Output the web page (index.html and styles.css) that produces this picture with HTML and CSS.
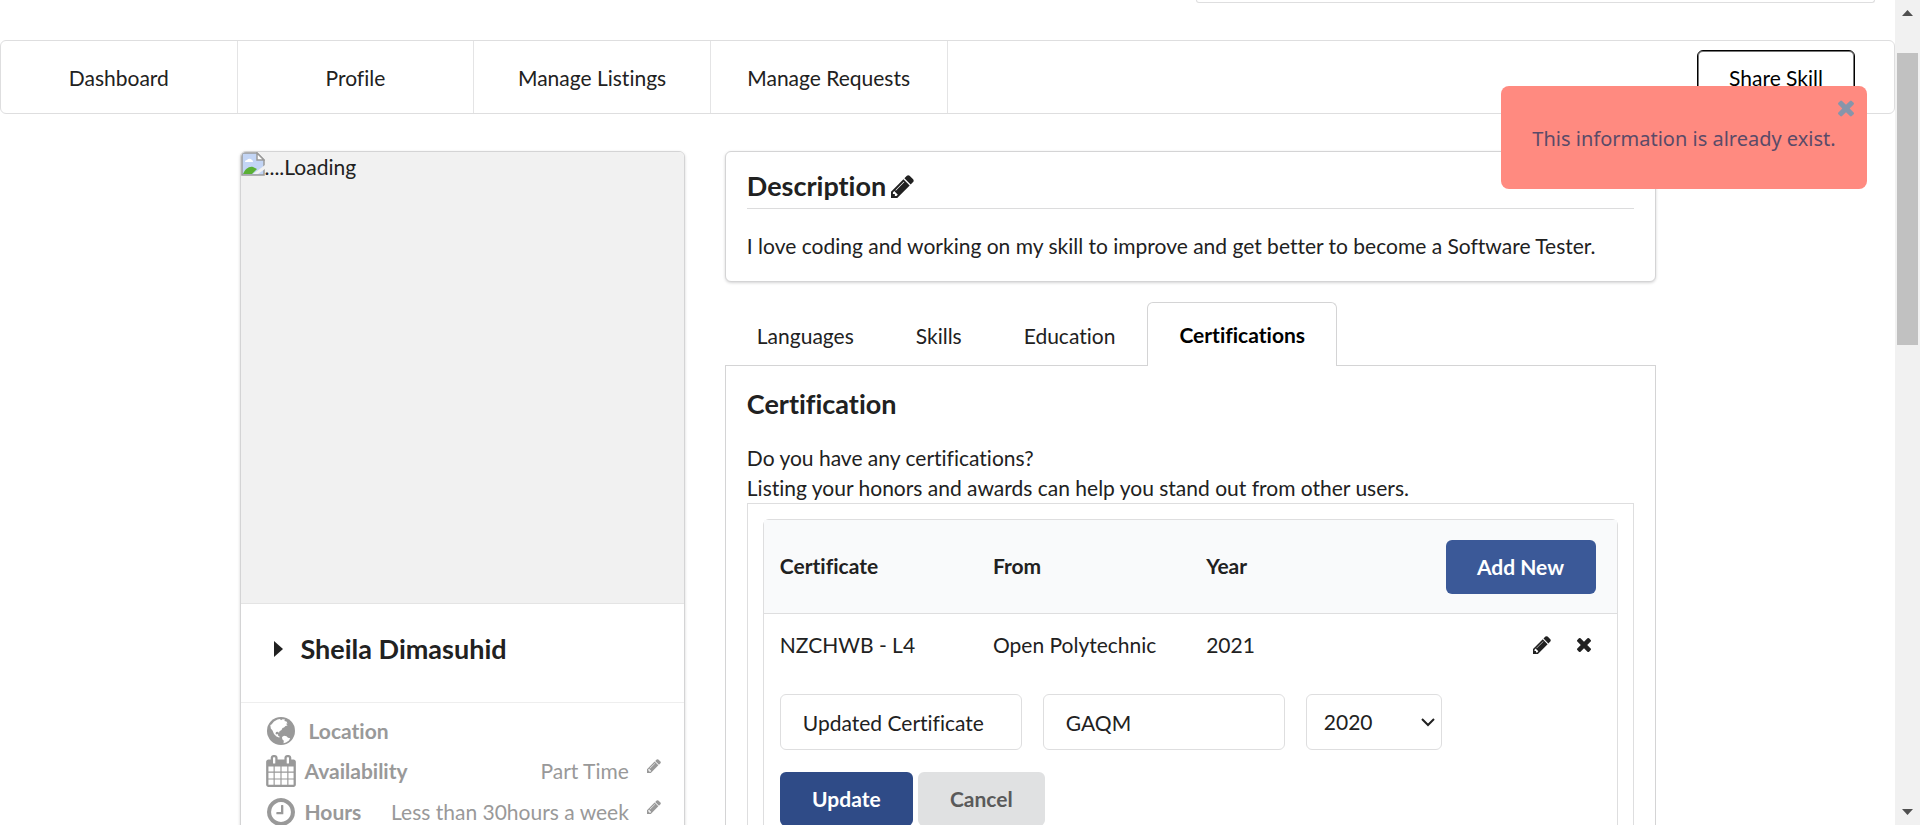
FILE: index.html
```html
<!DOCTYPE html>
<html lang="en">
<head>
<meta charset="utf-8">
<title>Profile</title>
<link rel="stylesheet" href="styles.css">
</head>
<body>
<svg class="defs" aria-hidden="true">
  <symbol id="pencil" viewBox="0 0 1536 1536"><path transform="matrix(1 0 0 -1 0 1402)" d="M363 0l91 91l-235 235l-91 -91v-107h128v-128h107zM886 928q0 22 -22 22q-10 0 -17 -7l-542 -542q-7 -7 -7 -17q0 -22 22 -22q10 0 17 7l542 542q7 7 7 17zM832 1120l416 -416l-832 -832h-416v416zM1515 1024q0 -53 -37 -90l-166 -166l-416 416l166 165q36 38 90 38q53 0 91 -38l235 -234q37 -39 37 -91z"/></symbol>
  <symbol id="cross" viewBox="110 0 1188 1188"><path transform="matrix(1 0 0 -1 0 1170)" d="M1298 214q0 -40 -28 -68l-136 -136q-28 -28 -68 -28t-68 28l-294 294l-294 -294q-28 -28 -68 -28t-68 28l-136 136q-28 28 -28 68t28 68l294 294l-294 294q-28 28 -28 68t28 68l136 136q28 28 68 28t68 -28l294 -294l294 294q28 28 68 28t68 -28l136 -136q28 -28 28 -68t-28 -68l-294 -294l294 -294q28 -28 28 -68z"/></symbol>
  <symbol id="calendar" viewBox="0 0 1664 1792"><path transform="matrix(1 0 0 -1 0 1536)" d="M128 -128h288v288h-288v-288zM480 -128h320v288h-320v-288zM128 224h288v320h-288v-320zM480 224h320v320h-320v-320zM128 608h288v288h-288v-288zM864 -128h320v288h-320v-288zM480 608h320v288h-320v-288zM1248 -128h288v288h-288v-288zM864 224h320v320h-320v-320zM512 1088v288q0 13 -9.5 22.5t-22.5 9.5h-64q-13 0 -22.5 -9.5t-9.5 -22.5v-288q0 -13 9.5 -22.5t22.5 -9.5h64q13 0 22.5 9.5t9.5 22.5zM1248 224h288v320h-288v-320zM864 608h320v288h-320v-288zM1248 608h288v288h-288v-288zM1280 1088v288q0 13 -9.5 22.5t-22.5 9.5h-64q-13 0 -22.5 -9.5t-9.5 -22.5v-288q0 -13 9.5 -22.5t22.5 -9.5h64q13 0 22.5 9.5t9.5 22.5zM1664 1152v-1280q0 -52 -38 -90t-90 -38h-1408q-52 0 -90 38t-38 90v1280q0 52 38 90t90 38h128v96q0 66 47 113t113 47h64q66 0 113 -47t47 -113v-96h384v96q0 66 47 113t113 47h64q66 0 113 -47t47 -113v-96h128q52 0 90 -38t38 -90z"/></symbol>
  <symbol id="clock" viewBox="0 0 1536 1536"><path transform="matrix(1 0 0 -1 0 1408)" d="M896 992v-448q0 -14 -9 -23t-23 -9h-320q-14 0 -23 9t-9 23v64q0 14 9 23t23 9h224v352q0 14 9 23t23 9h64q14 0 23 -9t9 -23zM1312 640q0 148 -73 273t-198 198t-273 73t-273 -73t-198 -198t-73 -273t73 -273t198 -198t273 -73t273 73t198 198t73 273zM1536 640q0 -209 -103 -385.5t-279.5 -279.5t-385.5 -103t-385.5 103t-279.5 279.5t-103 385.5t103 385.5t279.5 279.5t385.5 103t385.5 -103t279.5 -279.5t103 -385.5z"/></symbol>
  <symbol id="globe" viewBox="0 0 28 28"><circle cx="14" cy="14" r="14"/><path fill="#fff" d="M4.500 7.500 7 4.500l3.500-2 2.500-.5 1 1.200 1.500-1 2.500.3-.6 1.500 2.100.5 1 2-1.500.3 1.500 1.700-2 .5-1.500 1.500-1.500.5-1 2-2 1.200-.5 1.800-1-1.200-2 .3-.5 2 1.500.5 1-.5.2 1.700 1.800 1.200-1 .5-2.500-1-2.500-2.500-1.500-3.500-1.700-2-.5-3.500z"/><path fill="#fff" d="m15 20 2-1.200 2.500.4 1.500 1.500 2.200.6-1.200 2.200-3 2-2.500.7.3-2.500-1.500-1.500z"/></symbol>
</svg>

<div class="page">
  <main class="content">
    <div class="search-row"><div class="search-box"></div></div>

    <nav class="menu">
      <a class="menu-item" href="#">Dashboard</a>
      <a class="menu-item" href="#">Profile</a>
      <a class="menu-item" href="#">Manage Listings</a>
      <a class="menu-item" href="#">Manage Requests</a>
      <div class="menu-right"><button class="share" type="button">Share Skill</button></div>
    </nav>

    <div class="columns">
      <aside class="side">
        <section class="card profile">
          <div class="photo">
            <svg class="broken" viewBox="0 0 24 24" aria-hidden="true"><path fill="#c3d5f5" stroke="#9a9a9a" stroke-width="1.500" d="M1 1h15l7 7v15H1z"/><path fill="#fff" d="M4 10a2 2 0 0 1 2-2 3 3 0 0 1 5 0 2 2 0 0 1 1 2z"/><path fill="#5ab035" d="M2 22c2-5 6-8 10-7l4 2-5 5z"/><path fill="#fff" stroke="#9a9a9a" stroke-width="1.500" d="M16 1v7h7z"/><path fill="#f1f1f1" d="m24 13-12 9h5l7-5z"/></svg><span>....Loading</span>
          </div>
          <div class="name"><svg class="caret" viewBox="0 0 9 16" aria-hidden="true"><path d="M0 0l9 8-9 8z"/></svg><h3 class="title">Sheila Dimasuhid</h3></div>
          <ul class="facts">
            <li class="fact fact-first"><svg class="fact-icon"><use href="#globe"/></svg><strong>Location</strong></li>
            <li class="fact"><svg class="fact-icon fact-calendar"><use href="#calendar"/></svg><strong>Availability</strong><span class="value">Part Time</span><button class="icon-button" type="button" aria-label="Edit availability"><svg class="small-pencil"><use href="#pencil"/></svg></button></li>
            <li class="fact"><svg class="fact-icon"><use href="#clock"/></svg><strong>Hours</strong><span class="value">Less than 30hours a week</span><button class="icon-button" type="button" aria-label="Edit hours"><svg class="small-pencil"><use href="#pencil"/></svg></button></li>
          </ul>
        </section>
      </aside>

      <div class="details">
        <section class="card description">
          <div class="description-head"><h3 class="title">Description</h3><button class="icon-button" type="button" aria-label="Edit description"><svg class="large-pencil"><use href="#pencil"/></svg></button></div>
          <p class="text">I love coding and working on my skill to improve and get better to become a Software Tester.</p>
        </section>

        <div class="tabs">
          <a class="tab" href="#">Languages</a>
          <a class="tab" href="#">Skills</a>
          <a class="tab" href="#">Education</a>
          <a class="tab tab-active" href="#">Certifications</a>
        </div>

        <section class="panel">
          <h3 class="title">Certification</h3>
          <p class="text intro">Do you have any certifications?<br>Listing your honors and awards can help you stand out from other users.</p>
          <div class="frame">
            <table class="table">
              <thead>
                <tr><th>Certificate</th><th>From</th><th>Year</th><th class="actions"><button class="button add" type="button">Add New</button></th></tr>
              </thead>
              <tbody>
                <tr><td>NZCHWB - L4</td><td>Open Polytechnic</td><td>2021</td>
                  <td class="actions"><span class="action-icons"><button class="icon-button" type="button" aria-label="Edit"><svg class="row-pencil"><use href="#pencil"/></svg></button><button class="icon-button" type="button" aria-label="Delete"><svg class="row-cross"><use href="#cross"/></svg></button></span></td></tr>
                <tr><td class="edit" colspan="4">
                  <div class="fields">
                    <input class="field" type="text" aria-label="Certificate" value="Updated Certificate">
                    <input class="field" type="text" aria-label="From" value="GAQM">
                    <div class="select-wrap"><select class="field select" aria-label="Year"><option>2020</option></select><svg class="chevron" viewBox="0 0 14 9" aria-hidden="true"><path d="M1 1l6 6 6-6"/></svg></div>
                  </div>
                  <div class="buttons"><button class="button update" type="button">Update</button><button class="button cancel" type="button">Cancel</button></div>
                </td></tr>
              </tbody>
            </table>
          </div>
        </section>
      </div>
    </div>
  </main>

  <div class="scrollbar" aria-hidden="true">
    <svg class="arrow" viewBox="0 0 11 6"><path d="M0 6l5.500-6L11 6z"/></svg>
    <div class="track"><div class="thumb"></div></div>
    <svg class="arrow" viewBox="0 0 11 6"><path d="M0 0h11l-5.500 6z"/></svg>
  </div>
</div>

<div class="toast" role="alert"><button class="icon-button toast-close" type="button" aria-label="Close"><svg class="toast-cross"><use href="#cross"/></svg></button>This information is already exist.</div>
</body>
</html>
```

FILE: styles.css
```css
* { box-sizing: border-box; }
body {
  margin: 0;
  font: 21px/30px Lato, "Liberation Sans", sans-serif;
  font-variant-ligatures: none;
  color: #212121;
  background: #fff;
  overflow: hidden;
}
svg { display: block; fill: currentColor; }
.defs { position: absolute; width: 0; height: 0; }
button, input, select { font: inherit; color: inherit; }
a { color: inherit; text-decoration: none; }
.page { display: flex; height: 100vh; }
.content { flex: 1; min-width: 0; overflow: hidden; }

.search-row { display: flex; justify-content: flex-end; padding-right: 20px; }
.search-box { width: 36.2%; height: 3px; border: 1px solid #dededf; border-top: 0; border-radius: 0 0 6px 6px; }

.menu { display: flex; height: 74px; margin-top: 37px; border: 1px solid #dededf; border-radius: 6px; }
.menu-item { flex: 0 0 12.5%; display: flex; align-items: center; justify-content: center; padding-top: 2px; border-right: 1px solid #e4e4e5; }
.menu-right { flex: 1; display: flex; justify-content: flex-end; align-items: center; padding: 2px 39px 0 0; }
.share { width: 158px; height: 56px; border: 1px solid #000; border-radius: 6px; background: #fff; color: #000; box-shadow: inset 0 0 0 1px #777; }

.columns { display: grid; grid-template-columns: 1fr 2fr; width: 77%; max-width: 1456px; margin: 37px auto 0; }
.side, .details { padding: 0 20px; min-width: 0; }
.card { border: 1px solid #d4d4d5; border-radius: 6px; box-shadow: 0 1px 3px #d4d4d5; background: #fff; }
.title { margin: 0; font-size: 27px; line-height: 34px; font-weight: 700; }
.text { margin: 0; }

.profile { overflow: hidden; }
.photo { display: flex; align-items: flex-start; height: 452px; background: #f1f1f1; border-bottom: 1px solid #e4e4e4; }
.broken { width: 24px; height: 24px; }
.name { display: flex; align-items: center; gap: 18px; height: 99px; padding: 0 33px 8px; border-bottom: 1px solid #eee; }
.caret { width: 9px; height: 16px; }
.facts { margin: 0; padding: 8px 23px 8px 25px; list-style: none; color: #999; }
.fact { display: flex; align-items: center; gap: 9px; height: 41px; }
.fact-first { gap: 13px; height: 39px; }
.fact-icon { width: 28px; height: 28px; margin: 0 1px; }
.fact-calendar { width: 30px; height: 32px; margin: 0; }
.value { margin-left: auto; }
.icon-button { display: block; padding: 0; border: 0; background: none; }
.fact .icon-button { margin: 0 0 10px 9px; }
.small-pencil { width: 14px; height: 14px; }

.description { padding: 16px 21px 20px; }
.description-head { display: flex; align-items: center; gap: 5px; height: 41px; padding-bottom: 4px; border-bottom: 1px solid #dcdcdd; }
.large-pencil { width: 23px; height: 23px; }
.description .text { padding-top: 22px; }

.tabs { display: flex; margin-top: 20px; }
.tab { height: 64px; padding: 19px 32px 0; }
.tab + .tab { padding-left: 30px; }
.tab.tab-active { padding: 17px 31px 0; border: 1px solid #d4d4d5; border-bottom: 0; border-radius: 6px 6px 0 0; background: #fff; font-weight: 700; color: #000; position: relative; }
.panel { margin-top: -1px; padding: 21px; border: 1px solid #d4d4d5; }
.intro { padding-top: 22px; }
.frame { padding: 15px; border: 1px solid #dededf; }
.table { width: 100%; table-layout: fixed; border-collapse: separate; border-spacing: 0; border: 1px solid #dededf; border-radius: 6px; }
.table th, .table td { padding: 16px; text-align: left; }
.table th { height: 94px; padding-bottom: 18px; background: #f9fafb; border-bottom: 1px solid #dededf; }
.table th.actions { padding: 0 21px 0 0; }
.button { height: 54px; border: 0; border-radius: 6px; font-weight: 700; color: #fff; }
.add { display: block; width: 150px; margin-left: auto; background: #3b5998; }
.action-icons { display: flex; justify-content: flex-end; align-items: center; gap: 26px; padding-right: 10px; }
.row-pencil { width: 18px; height: 18px; }
.row-cross { width: 14px; height: 14px; }
.table .edit { padding-top: 18px; }
.fields { display: flex; gap: 21px; }
.field { flex: 0 0 242px; min-width: 0; height: 56px; padding: 0 22px; border: 1px solid #dededf; border-radius: 6px; background: #fff; outline: 0; }
.select-wrap { position: relative; flex: 0 0 136px; }
.select { width: 100%; padding: 0 17px; appearance: none; }
.chevron { position: absolute; right: 7px; top: 24px; width: 14px; height: 9px; fill: none; stroke: #212121; stroke-width: 2; pointer-events: none; }
.buttons { display: flex; gap: 5px; margin-top: 22px; }
.update { width: 133px; background: #2f4b87; }
.cancel { width: 127px; background: #e0e1e2; color: #5a5a5a; }

.scrollbar { display: flex; flex-direction: column; align-items: center; width: 25px; background: #f1f1f1; padding: 10px 0; }
.arrow { width: 11px; height: 6px; fill: #505050; }
.track { flex: 1; width: 21px; padding-top: 37px; }
.thumb { height: 38.6%; background: #c1c1c1; }

.toast { position: fixed; top: 86px; right: 53px; width: 366px; height: 103px; padding-top: 38px; border-radius: 8px; background: #ff8a80; color: #5a4a68; font-family: "Noto Sans", sans-serif; font-size: 20px; text-align: center; }
.toast-close { position: absolute; top: 14px; right: 13px; color: #8795aa; }
.toast-cross { width: 16px; height: 17px; }
```
